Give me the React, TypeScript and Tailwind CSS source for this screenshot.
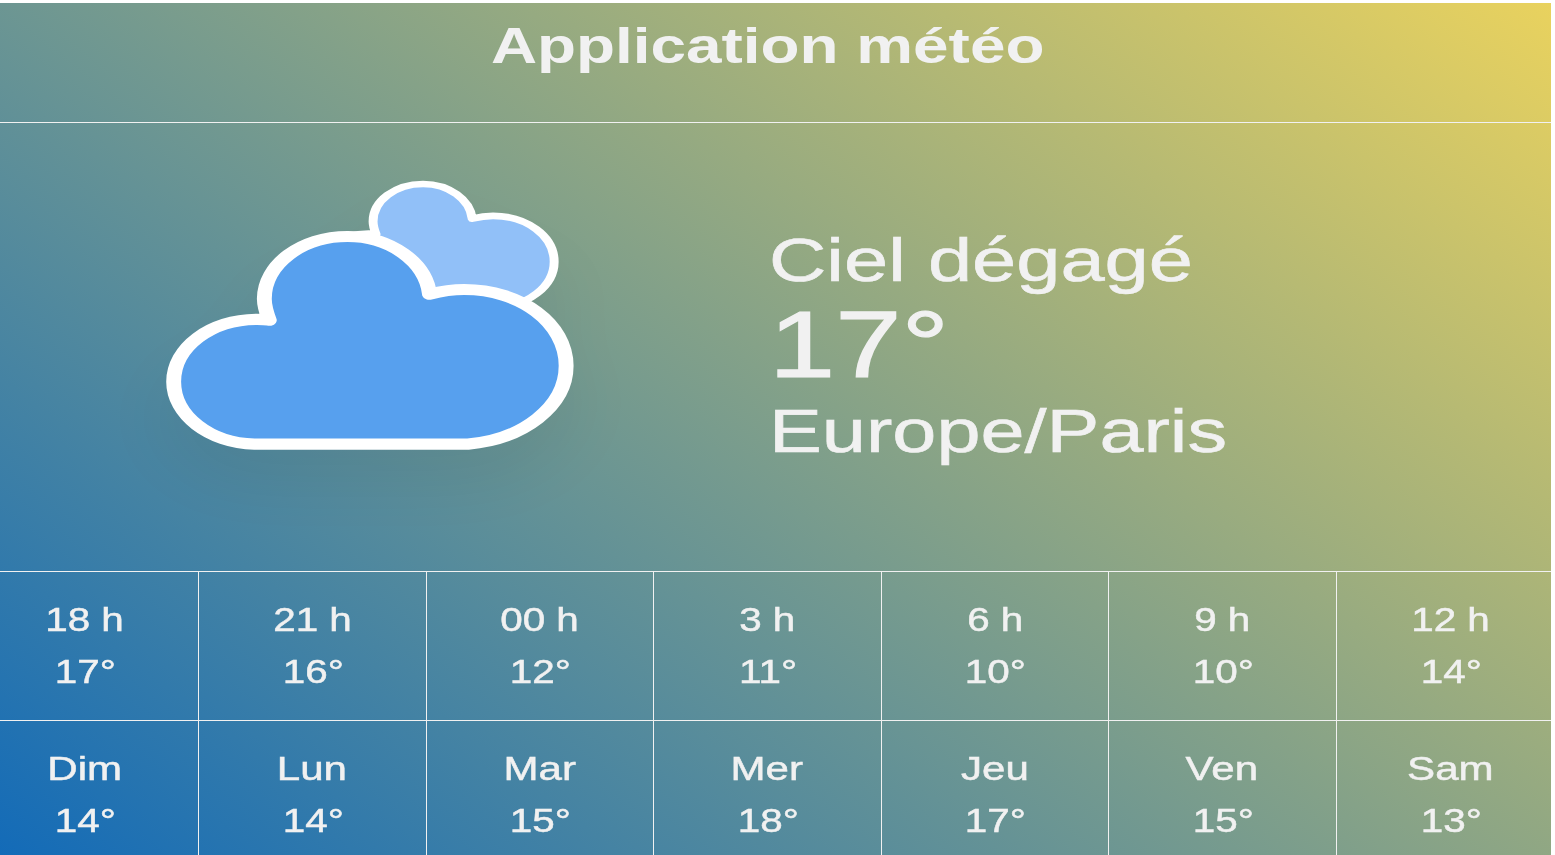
const hours = [
  ['18 h', '17°'],
  ['21 h', '16°'],
  ['00 h', '12°'],
  ['3 h', '11°'],
  ['6 h', '10°'],
  ['9 h', '10°'],
  ['12 h', '14°'],
];

const days = [
  ['Dim', '14°'],
  ['Lun', '14°'],
  ['Mar', '15°'],
  ['Mer', '18°'],
  ['Jeu', '17°'],
  ['Ven', '15°'],
  ['Sam', '13°'],
];

const cloudPath =
  'M47.7,35.4c0-4.6-3.7-8.2-8.2-8.2c-1,0-1.9,0.2-2.8,0.5c-0.3-3.4-3.1-6.2-6.6-6.2c-3.7,0-6.7,3-6.7,6.7c0,0.8,0.2,1.6,0.4,2.3c-0.3-0.1-0.7-0.1-1-0.1c-3.7,0-6.7,3-6.7,6.7c0,3.6,2.9,6.6,6.5,6.7l17.2,0C44.2,43.3,47.7,39.8,47.7,35.4z';

function CloudIcon() {
  return (
    <svg className="block h-[448px] w-[767px] shrink-0" viewBox="0 123 767 448" aria-hidden="true">
      <defs>
        <filter id="cloud-shadow" x="-50%" y="-50%" width="200%" height="200%" colorInterpolationFilters="sRGB">
          <feGaussianBlur in="SourceAlpha" stdDeviation="3" />
          <feOffset dx="0" dy="4" />
          <feComponentTransfer>
            <feFuncA type="linear" slope="0.055" />
          </feComponentTransfer>
        </filter>
        <g id="clouds">
          <path
            d={cloudPath}
            transform="translate(18.116 2.965) scale(0.6)"
            fill="#91C0F8"
            stroke="#fff"
            strokeLinejoin="round"
            strokeWidth="1.2"
          />
          <path d={cloudPath} fill="#57A0EE" stroke="#fff" strokeLinejoin="round" strokeWidth="1.2" />
        </g>
      </defs>
      <g transform="translate(-26.3 36.3) scale(12.42 9.31)">
        <use href="#clouds" filter="url(#cloud-shadow)" />
        <use href="#clouds" />
      </g>
    </svg>
  );
}

function ForecastRow({ items, labelClass }: { items: string[][]; labelClass: string }) {
  return (
    <div className="-ml-[28.5px] grid h-[149px] w-[1592.5px] shrink-0 grid-cols-7 border-t border-[#f1f1f1]">
      {items.map(([label, temp], i) => (
        <div
          key={label}
          className={`flex flex-col items-center pt-[21.5px] text-[33.4px] leading-[52px] [-webkit-text-stroke:0.5px_#f1f1f1] ${
            i < 6 ? 'border-r border-[#f1f1f1]' : ''
          }`}
        >
          <span className={`whitespace-nowrap ${labelClass}`}>{label}</span>
          <span className="scale-x-[1.21] pl-px whitespace-nowrap">{temp}</span>
        </div>
      ))}
    </div>
  );
}

export default function App() {
  return (
    <div className="h-[855px] w-[1555px] overflow-hidden bg-white pt-[3px] font-['Liberation_Sans',Arial,sans-serif] text-[#f1f1f1]">
      <main className="flex h-[852px] w-[1551px] flex-col overflow-hidden bg-[linear-gradient(37.5deg,#136bb8_0%,#e9d25e_100%)]">
        <header className="flex h-[120px] shrink-0 justify-center border-b border-[#f1f1f1] pt-[13px] pr-[15px]">
          <h1 className="h-[60px] scale-x-[1.277] text-[50px] leading-[60px] font-bold whitespace-nowrap">
            Application météo
          </h1>
        </header>
        <section className="flex h-[448px] shrink-0">
          <CloudIcon />
          <div className="flex flex-col items-start pt-[102px] pl-[2px] [-webkit-text-stroke:0.6px_#f1f1f1]">
            <p className="origin-left scale-x-[1.302] text-[61px] leading-[70px] whitespace-nowrap">Ciel dégagé</p>
            <p className="origin-left scale-x-[1.26] text-[94.5px] leading-[98px] whitespace-nowrap [-webkit-text-stroke:1.2px_#f1f1f1]">
              17°
            </p>
            <p className="origin-left scale-x-[1.299] text-[61px] leading-[76px] whitespace-nowrap">Europe/Paris</p>
          </div>
        </section>
        <ForecastRow items={hours} labelClass="scale-x-[1.21]" />
        <ForecastRow items={days} labelClass="scale-x-[1.26]" />
      </main>
    </div>
  );
}
